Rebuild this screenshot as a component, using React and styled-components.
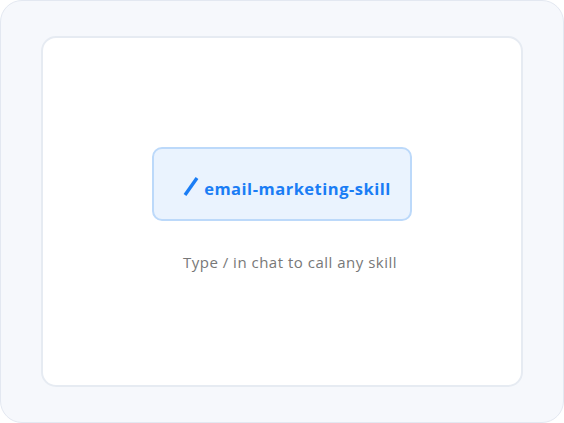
import React from "react";
import styled, { createGlobalStyle } from "styled-components";

const Global = createGlobalStyle`
  html, body { margin: 0; padding: 0; background: #ffffff; }
  * { box-sizing: border-box; }
`;

const Frame = styled.div`
  width: 564px;
  height: 423px;
  background: #f6f8fc;
  border: 1px solid #e3e8f1;
  border-radius: 22px;
  padding: 35px 40px 35px 40px;
  display: flex;
  font-family: "Open Sans", "Lato", sans-serif;
`;

const Card = styled.div`
  flex: 1;
  background: #ffffff;
  border: 2px solid #e6ebf2;
  border-radius: 15px;
  display: flex;
  flex-direction: column;
  align-items: center;
  justify-content: center;
  gap: 31px;
  padding-bottom: 4px;
`;

const Chip = styled.div`
  width: 260px;
  height: 74px;
  background: #eaf3fe;
  border: 2px solid #bcd9fa;
  border-radius: 10px;
  display: flex;
  align-items: center;
  justify-content: center;
  gap: 5px;
  padding-left: 10px;
  padding-top: 8px;
`;

const SkillName = styled.span`
  color: #1a7df5;
  font-size: 16.5px;
  font-weight: 700;
  letter-spacing: 0.5px;
`;

const Caption = styled.div`
  color: #787878;
  font-size: 15px;
  line-height: 20px;
  font-weight: 400;
  letter-spacing: 0.5px;
  margin-left: 16px;
`;

const Slash = () => (
  <svg width="16" height="24" viewBox="0 0 16 24">
    <line x1="2" y1="19" x2="14" y2="2" stroke="#1a7df5" strokeWidth="3.4" />
  </svg>
);

export default function App() {
  return (
    <>
      <Global />
      <Frame>
        <Card>
          <Chip>
            <Slash />
            <SkillName>email-marketing-skill</SkillName>
          </Chip>
          <Caption>Type / in chat to call any skill</Caption>
        </Card>
      </Frame>
    </>
  );
}
